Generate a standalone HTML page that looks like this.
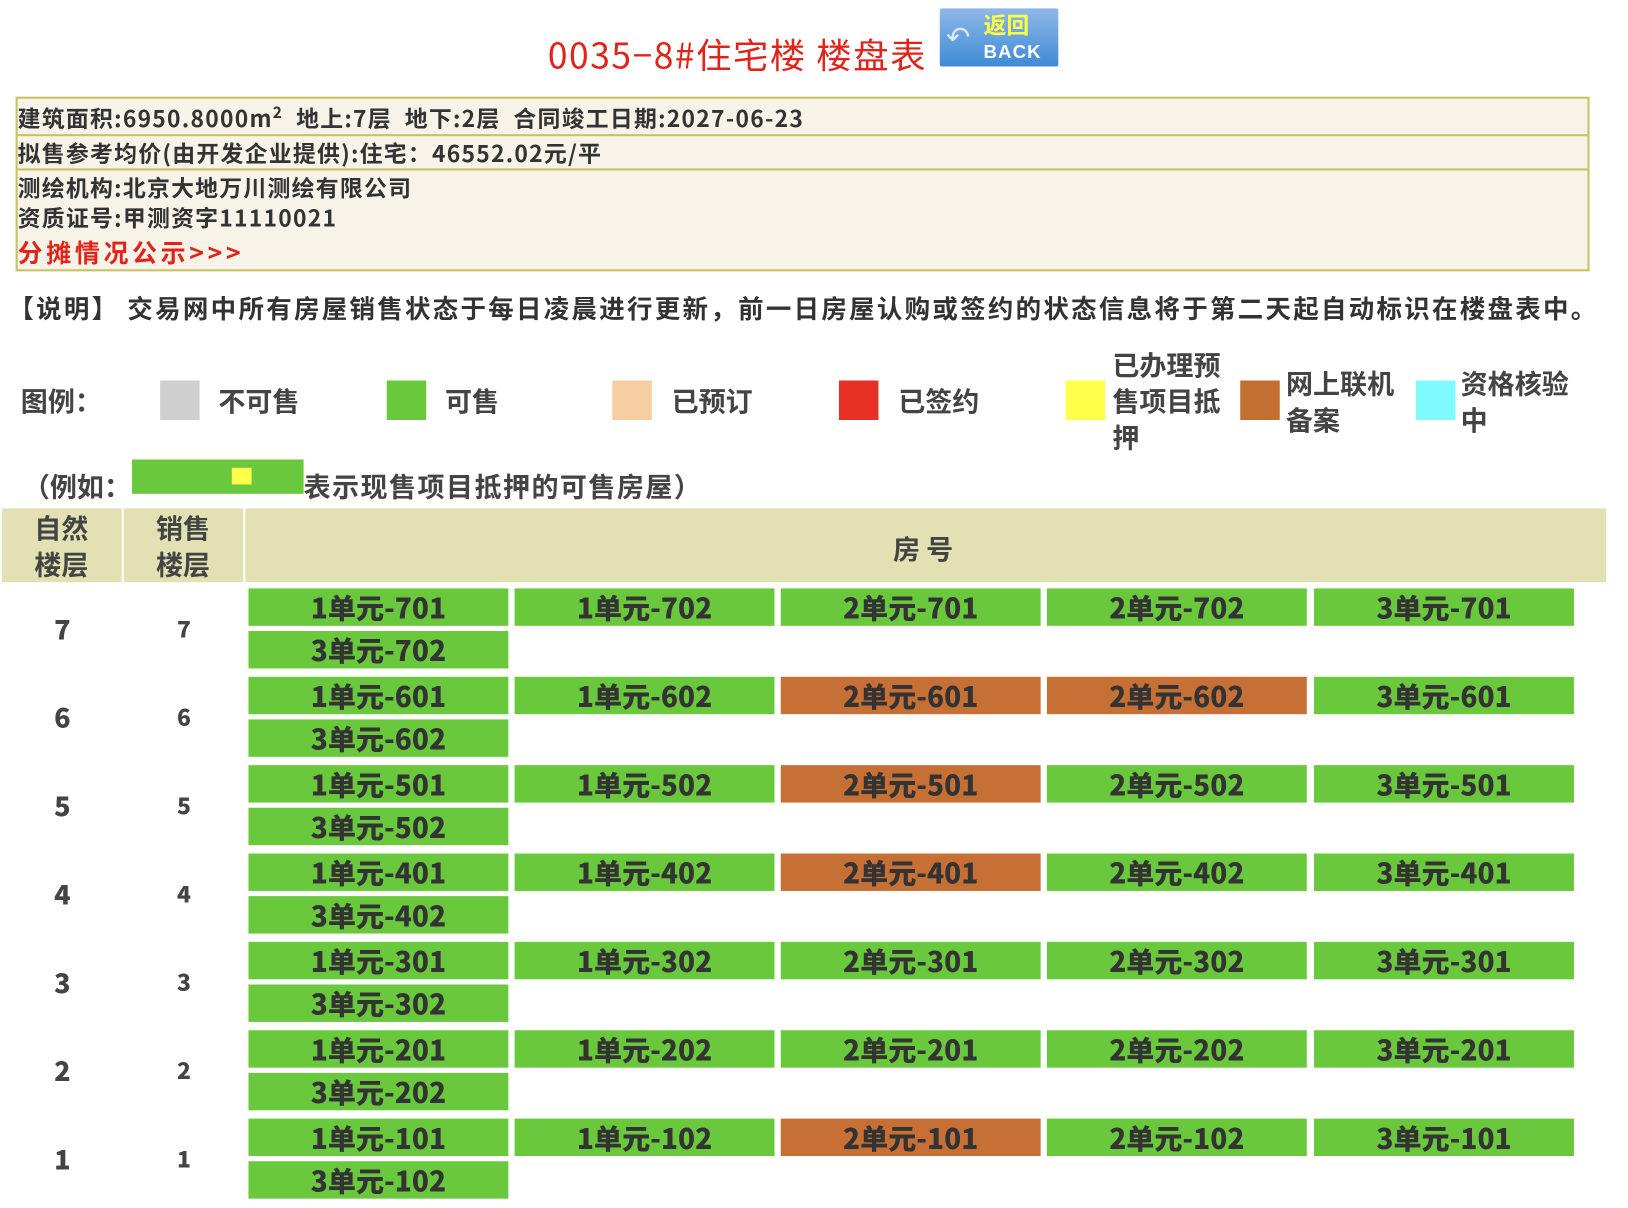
<!DOCTYPE html>
<html><head><meta charset="utf-8">
<style>
html,body{margin:0;padding:0;background:#fff;width:1628px;height:1208px;overflow:hidden}
#w{position:absolute;left:0;top:0;width:1566px;height:1162px;transform:scale(1.0396,1.0396);transform-origin:0 0;font-family:"Noto Sans CJK SC","Liberation Sans",sans-serif;color:#444}
.a{position:absolute;white-space:nowrap}
.b{font-weight:bold}
.sw{position:absolute;width:38px;height:38px;top:366px}
.lg{position:absolute;font-size:26px;font-weight:bold;color:#444;line-height:35px}
.c{position:absolute;width:250px;height:36px;background:#6ac83c;color:#333;font-weight:900;font-size:27px;text-align:center;line-height:36px}
.o{background:#c67035}
.fn{position:absolute;font-size:26px;font-weight:900;color:#444;width:40px;text-align:center;line-height:36px}
.inf{letter-spacing:1.2px}
</style></head><body><div id="w">
<div class="a" style="left:527px;top:28px;font-size:34px;line-height:48px;color:#e2231a;letter-spacing:1.5px">0035−8#住宅楼 楼盘表</div>
<div class="a" style="left:904px;top:8px;width:114px;height:56px;background:linear-gradient(#8fb8e8,#3f8ad6);border-radius:2px">
<div class="a" style="left:6px;top:8px;font-size:28px;color:#d8e8ff;line-height:36px">↶</div>
<div class="a b" style="left:42px;top:0px;font-size:22px;line-height:30px;color:#ffff40">返回</div>
<div class="a b" style="left:42px;top:30px;font-size:18px;line-height:24px;color:#fff;letter-spacing:1px;font-family:'Liberation Sans',sans-serif">BACK</div></div>

<div class="a" style="left:15px;top:93px;width:1510px;height:164px;border:2px solid #c8c263;background:#f7f3e8"></div>
<div class="a" style="left:17px;top:129px;width:1510px;height:2px;background:#c8c263"></div>
<div class="a" style="left:17px;top:162px;width:1510px;height:2px;background:#c8c263"></div>
<div class="a b inf" style="left:17px;top:97px;font-size:22px;line-height:32px;color:#333">建筑面积:6950.8000m<sup style="font-size:15px;line-height:0">2</sup> &nbsp;地上:7层 &nbsp;地下:2层 &nbsp;合同竣工日期:2027-06-23</div>
<div class="a b inf" style="left:17px;top:131px;font-size:22px;line-height:32px;color:#333">拟售参考均价(由开发企业提供):住宅：46552.02元/平</div>
<div class="a b inf" style="left:17px;top:164px;font-size:22px;line-height:32px;color:#333">测绘机构:北京大地万川测绘有限公司</div>
<div class="a b inf" style="left:17px;top:193px;font-size:22px;line-height:32px;color:#333">资质证号:甲测资字11110021</div>
<div class="a b" style="left:17px;top:225px;font-size:24px;line-height:34px;color:#e2231a;letter-spacing:3.5px">分摊情况公示&gt;&gt;&gt;</div>

<div class="a b" style="left:8px;top:279px;font-size:24.5px;line-height:36px;color:#333;letter-spacing:2.2px">【说明】 交易网中所有房屋销售状态于每日凌晨进行更新，前一日房屋认购或签约的状态信息将于第二天起自动标识在楼盘表中。</div>

<div class="lg" style="left:20px;top:368px">图例：</div>
<div class="sw" style="left:154px;background:#cfcfcf"></div><div class="lg" style="left:210px;top:368px">不可售</div>
<div class="sw" style="left:372px;background:#6ac83c"></div><div class="lg" style="left:428px;top:368px">可售</div>
<div class="sw" style="left:589px;background:#f7cda2"></div><div class="lg" style="left:646px;top:368px">已预订</div>
<div class="sw" style="left:807px;background:#e63124"></div><div class="lg" style="left:864px;top:368px">已签约</div>
<div class="sw" style="left:1025px;background:#ffff4a"></div><div class="lg" style="left:1070px;top:333px;white-space:normal;width:110px">已办理预售项目抵押</div>
<div class="sw" style="left:1193px;background:#c46f32"></div><div class="lg" style="left:1237px;top:351px;white-space:normal;width:110px">网上联机备案</div>
<div class="sw" style="left:1362px;background:#7ffaff"></div><div class="lg" style="left:1405px;top:351px;white-space:normal;width:110px">资格核验中</div>

<div class="lg" style="left:22px;top:450px">（例如：</div>
<div class="a" style="left:127px;top:442px;width:165px;height:33px;background:#6ac83c"><div class="a" style="left:96px;top:8px;width:19px;height:16px;background:#ffff4a"></div></div>
<div class="lg" style="left:292px;top:450px;letter-spacing:1.4px">表示现售项目抵押的可售房屋）</div>

<div class="a" style="left:2px;top:489px;width:1543px;height:71px;background:#e2e1b3"></div>
<div class="a" style="left:117px;top:489px;width:2px;height:71px;background:#fff"></div>
<div class="a" style="left:234px;top:489px;width:2px;height:71px;background:#fff"></div>
<div class="lg" style="left:33px;top:490px;white-space:normal;width:56px">自然楼层</div>
<div class="lg" style="left:150px;top:490px;white-space:normal;width:56px">销售楼层</div>
<div class="lg" style="left:859px;top:510px">房 号</div>

<div id="rows"></div>
<script>
var o={6:[2,3],5:[2],4:[2],1:[2]};var h='';var xs=[239,495,751,1007,1264];var u=['1单元-','1单元-','2单元-','2单元-','3单元-'];var s=['01','02','01','02','01'];
for(var f=7;f>=1;f--){var y=566+(7-f)*85;
h+='<div class="fn" style="left:40px;top:'+(y+21)+'px">'+f+'</div><div class="fn" style="left:157px;top:'+(y+20)+'px;font-size:22px">'+f+'</div>';
for(var i=0;i<5;i++){var oc=(o[f]&&o[f].indexOf(i)>=0)?' o':'';h+='<div class="c'+oc+'" style="left:'+xs[i]+'px;top:'+y+'px">'+u[i]+f+s[i]+'</div>';}
h+='<div class="c" style="left:239px;top:'+(y+41)+'px">3单元-'+f+'02</div>';}
document.getElementById('rows').innerHTML=h;
</script>
</div></body></html>
